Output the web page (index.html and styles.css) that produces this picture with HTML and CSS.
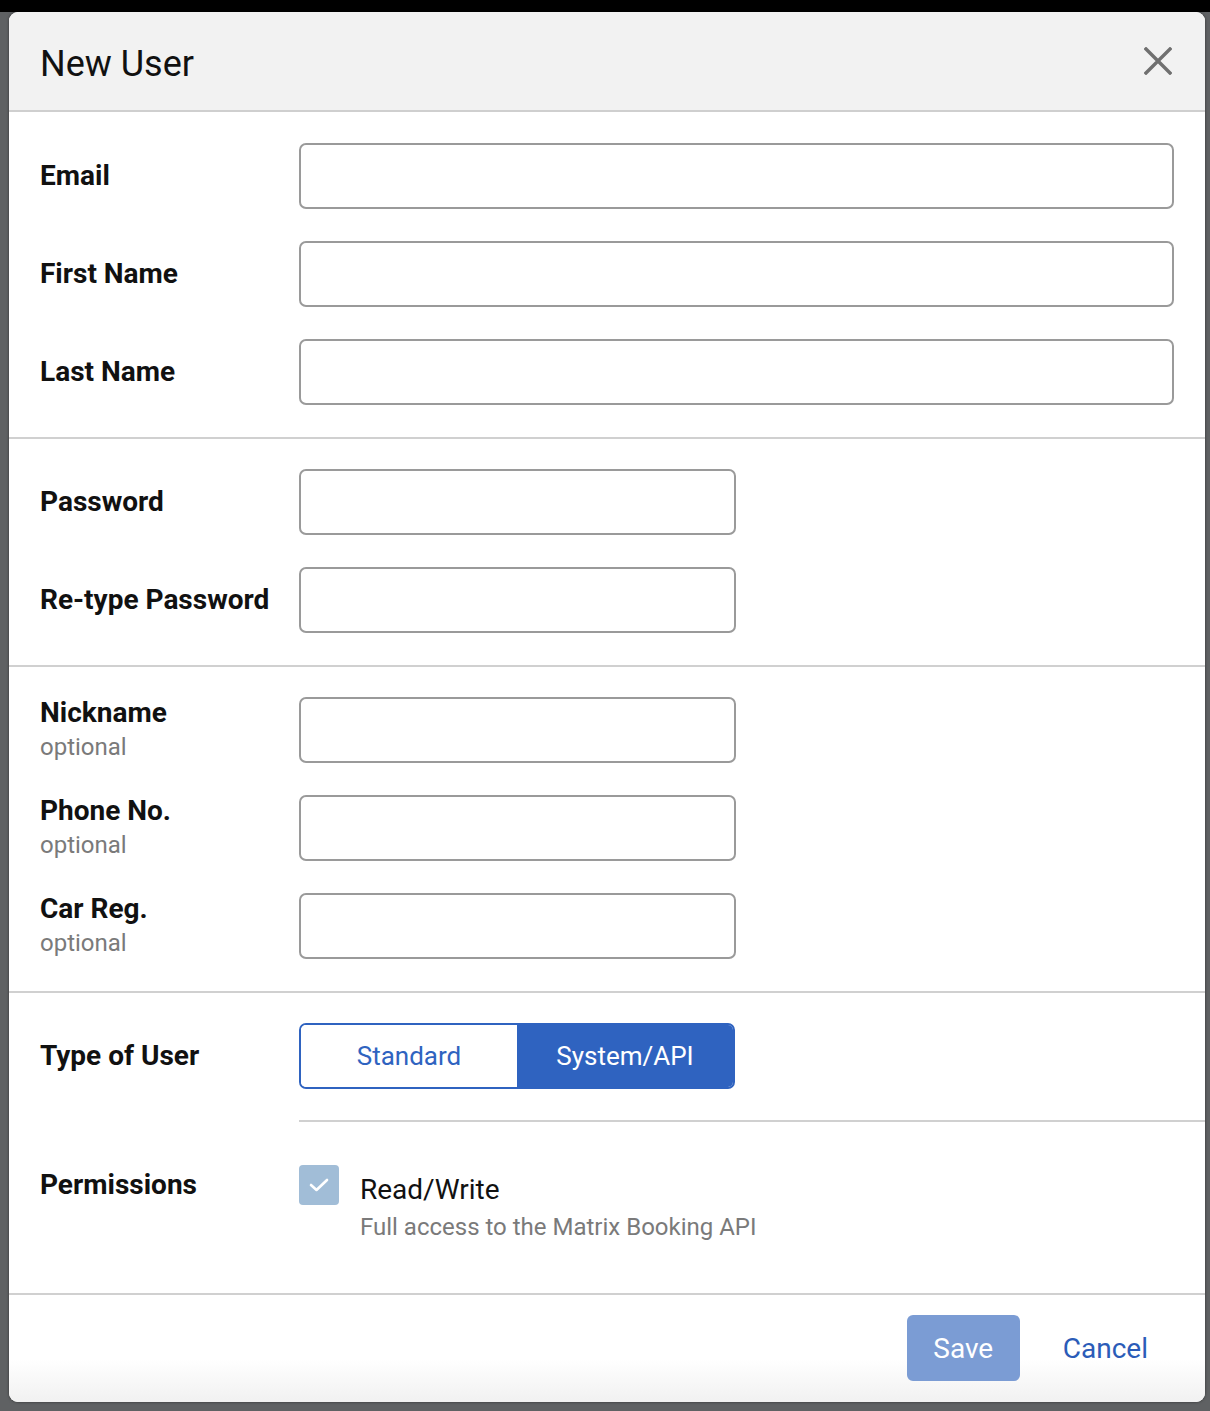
FILE: index.html
```html
<!DOCTYPE html>
<html>
<head>
<meta charset="utf-8">
<link rel="stylesheet" href="styles.css">
</head>
<body>
<div class="topbar"></div>
<div class="modal">
  <div class="modal-header">
    <h1 class="title">New User</h1>
    <button class="close" aria-label="Close">
      <svg width="28" height="28" viewBox="0 0 28 28"><path d="M2 2 L26 26 M26 2 L2 26" stroke="#707070" stroke-width="3.4" stroke-linecap="square"/></svg>
    </button>
  </div>

  <div class="section">
    <div class="row"><label class="label">Email</label><input class="field wide" type="text"></div>
    <div class="row"><label class="label">First Name</label><input class="field wide" type="text"></div>
    <div class="row"><label class="label">Last Name</label><input class="field wide" type="text"></div>
  </div>

  <div class="section">
    <div class="row"><label class="label">Password</label><input class="field" type="password"></div>
    <div class="row"><label class="label">Re-type Password</label><input class="field" type="password"></div>
  </div>

  <div class="section">
    <div class="row top"><div class="label"><div>Nickname</div><div class="opt">optional</div></div><input class="field" type="text"></div>
    <div class="row top"><div class="label"><div>Phone No.</div><div class="opt">optional</div></div><input class="field" type="text"></div>
    <div class="row top"><div class="label"><div>Car Reg.</div><div class="opt">optional</div></div><input class="field" type="text"></div>
  </div>

  <div class="section last">
    <div class="row"><div class="label">Type of User</div>
      <div class="toggle"><span class="seg">Standard</span><span class="seg active">System/API</span></div>
    </div>
    <div class="inner-divider"></div>
    <div class="row perm"><div class="label">Permissions</div>
      <div class="perm-body">
        <span class="checkbox"><svg width="22" height="16" viewBox="0 0 22 16"><path d="M3 8 L8.5 13 L19 3" fill="none" stroke="#fff" stroke-width="2.6" stroke-linecap="round" stroke-linejoin="round"/></svg></span>
        <div class="perm-text">
          <div class="perm-title">Read/Write</div>
          <div class="perm-desc">Full access to the Matrix Booking API</div>
        </div>
      </div>
    </div>
  </div>

  <div class="footer">
    <button class="btn-save">Save</button>
    <button class="btn-cancel">Cancel</button>
  </div>
</div>
</body>
</html>
```
FILE: styles.css
```css
html, body {
  margin: 0;
  padding: 0;
}
body {
  background: #5f6163;
  font-family: Roboto, "Liberation Sans", Arial, sans-serif;
  height: 1411px;
  overflow: hidden;
}
.topbar {
  height: 12px;
  background: #000;
}
.modal {
  margin-left: 9px;
  width: 1196px;
  height: 1390px;
  background: #fff;
  border-radius: 9px;
  overflow: hidden;
  box-shadow: 0 0 3px rgba(0,0,0,0.5);
  display: flex;
  flex-direction: column;
}
.modal-header {
  height: 98px;
  background: #f2f2f2;
  border-bottom: 2px solid #cfcfcf;
  display: flex;
  align-items: center;
  justify-content: space-between;
  padding: 0 32px 0 31px;
}
.title {
  margin: 0;
  font-size: 36px;
  font-weight: 400;
  color: #111;
  padding-top: 5px;
}
.close {
  background: none;
  border: 0;
  padding: 0;
  width: 28px;
  height: 28px;
  cursor: pointer;
  display: flex;
  margin-right: 1px;
}
.section {
  padding: 31px 31px 32px 31px;
  border-bottom: 2px solid #d0d0d0;
  display: flex;
  flex-direction: column;
  gap: 32px;
}
.section + .section {
  padding-top: 30px;
}
.row {
  display: flex;
  align-items: center;
}
.row.top {
  align-items: flex-start;
}
.label {
  width: 260px;
  flex: none;
  font-size: 28px;
  font-weight: 700;
  color: #111;
  line-height: 32px;
}
.opt {
  font-size: 24px;
  font-weight: 400;
  color: #7a7a7a;
  line-height: 30px;
  margin-top: 3px;
}
.field {
  box-sizing: border-box;
  width: 437px;
  height: 66px;
  border: 2px solid #9a9a9a;
  border-radius: 7px;
  background: #fff;
  margin: 0 0 0 -1px;
  font-size: 24px;
  padding: 0 14px;
}
.field.wide {
  width: 876px;
}
.toggle {
  display: flex;
  width: 436px;
  height: 66px;
  box-sizing: border-box;
  border: 2px solid #2f63c0;
  border-radius: 7px;
  overflow: hidden;
  margin-left: -1px;
}
.seg {
  flex: 1;
  display: flex;
  align-items: center;
  justify-content: center;
  font-size: 26px;
  color: #2f63c0;
  background: #fff;
}
.seg.active {
  background: #2f63c0;
  color: #fff;
}
.section.last {
  padding-right: 0;
  padding-bottom: 51px;
  gap: 0;
}
.inner-divider {
  margin-left: 259px;
  margin-top: 31px;
  border-top: 2px solid #d0d0d0;
}
.row.perm {
  align-items: flex-start;
  margin-top: 43px;
}
.row.perm .label {
  margin-top: 4px;
}
.perm-body {
  display: flex;
  align-items: flex-start;
  margin-left: -1px;
}
.checkbox {
  width: 40px;
  height: 40px;
  border-radius: 4px;
  background: #a1bdd7;
  display: flex;
  align-items: center;
  justify-content: center;
  flex: none;
}
.perm-text {
  margin-left: 21px;
  margin-top: 8px;
}
.perm-title {
  font-size: 28px;
  color: #111;
  line-height: 34px;
}
.perm-desc {
  font-size: 24px;
  color: #7a7a7a;
  line-height: 30px;
  margin-top: 5px;
}
.footer {
  flex: 1;
  display: flex;
  align-items: flex-start;
  justify-content: flex-end;
  padding: 20px 57px 0 0;
  background: linear-gradient(#ffffff 60%, #f1f1f1);
}
.btn-save {
  width: 113px;
  height: 66px;
  background: #7b9cd4;
  color: #fff;
  border: 0;
  border-radius: 6px;
  font-family: inherit;
  font-size: 28px;
  padding: 0;
}
.btn-cancel {
  margin-left: 43px;
  height: 66px;
  background: none;
  border: 0;
  padding: 0;
  color: #2b5cb8;
  font-family: inherit;
  font-size: 28px;
}
```
